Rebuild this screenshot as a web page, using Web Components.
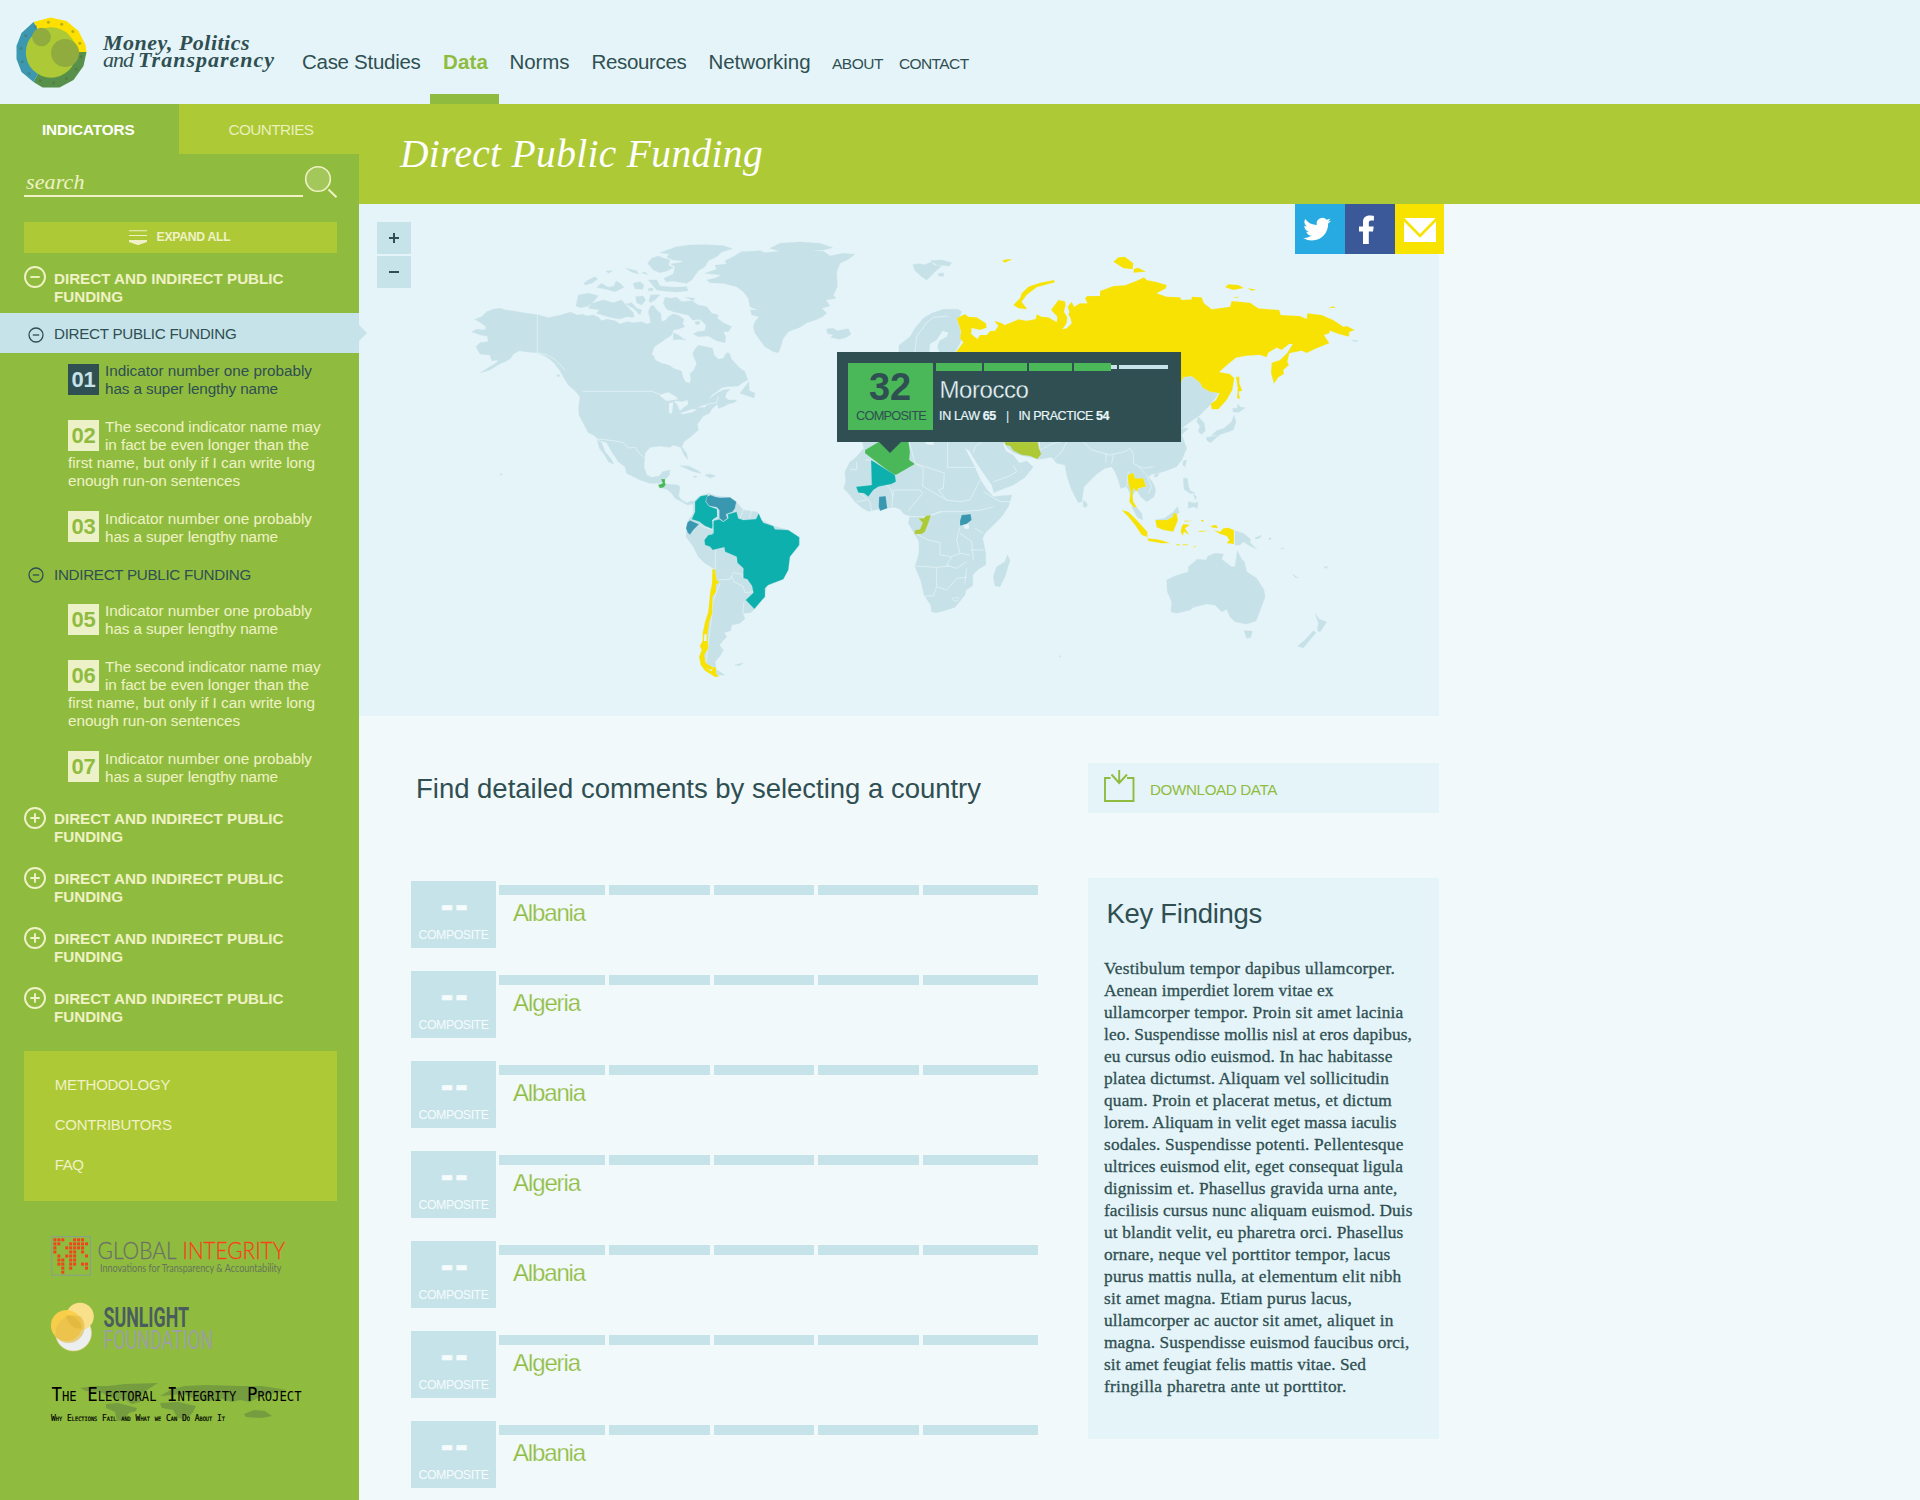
<!DOCTYPE html>
<html lang="en">
<head>
<meta charset="utf-8">
<title>Money, Politics and Transparency</title>
<style>
html,body{margin:0;padding:0}
body{width:1920px;height:1500px;overflow:hidden;background:#f1f9fb;font-family:"Liberation Sans",Arial,sans-serif;color:#2f4f52;
--ink:#2f4f52;--leaf:#8fbc3f;--lime:#adc936;--cream:#f0f2c6;--ice:#e5f4f8;--sky:#c6e3e9;--serif:"Liberation Serif",Georgia,serif}
</style>
</head>
<body>
<mpt-app></mpt-app>
<script>
const define = (name, css, html, after) => customElements.define(name, class extends HTMLElement {
  connectedCallback() {
    if (this.shadowRoot) return;
    const root = this.attachShadow({mode: 'open'});
    const body = typeof html === 'function' ? html(this) : html;
    root.innerHTML = `<style>*{box-sizing:border-box}${css}</style>${body}`;
    if (after) after(this, root);
  }
});
const line = (w, text, cls = '') => `<fit-line w="${w}"${cls ? ` class="${cls}"` : ''}>${text}</fit-line>`;

define('mpt-app', `
:host{display:flex;flex-direction:column;width:1920px;height:1500px}
.cols{display:flex;flex:1;min-height:0}`, `
<mpt-header></mpt-header><div class="cols"><mpt-sidebar></mpt-sidebar><mpt-main></mpt-main></div>`);

/* ---------- header ---------- */
define('mpt-header', `
:host{display:flex;height:104px;background:var(--ice);width:100%;flex:none}
mpt-logo{margin-left:15px;width:273px}
nav{display:flex;height:104px}
a{display:block;padding-top:49px;font-size:20.5px;line-height:26px;height:104px;color:var(--ink)}
a.on{color:var(--leaf);font-weight:bold;border-bottom:10px solid var(--leaf);width:69px;padding-left:13px}
a.s{font-size:15.5px;padding-top:51px}`, `
<mpt-logo></mpt-logo>
<nav>
<a style="margin-left:14px;width:128px">${line(118.5,'Case Studies')}</a>
<a class="on">${line(45,'Data')}</a>
<a style="margin-left:10.5px;width:82px">${line(60,'Norms')}</a>
<a style="width:117px">${line(95,'Resources')}</a>
<a style="width:123.5px">${line(102,'Networking')}</a>
<a class="s" style="width:67px">${line(51,'ABOUT')}</a>
<a class="s">${line(69.5,'CONTACT')}</a>
</nav>`);

define('mpt-logo', `
:host{display:flex}
svg{width:72px;height:72px;margin-top:16px;flex:none}
.name{margin:34px 0 0 16px;font-family:var(--serif);font-style:italic;color:var(--ink)}
.l{display:flex;align-items:baseline;height:17px;line-height:17px;font-size:22px;font-weight:bold}
.and{font-weight:normal;width:35px}
.l fit-line{display:block}`, () => {
  let dots = '';
  for (let i = 0; i < 14; i++) {
    const a = (i * 25.7 + 8) * Math.PI / 180;
    dots += `<circle cx="${(51.5 + 30.3 * Math.cos(a)).toFixed(1)}" cy="${(52.5 + 30.3 * Math.sin(a)).toFixed(1)}" r="1.5"/>`;
  }
  return `
<svg viewBox="15.5 16 72 72">
<path fill="#fde000" d="M34,22 51,17.5 67,21 79,31 86,45 87,52.5 51,52.5Z"/>
<path fill="#56904a" d="M87,52 84,66 74,80 60,87.5 43,87.5 34,82 51,52Z"/>
<path fill="#3c98b0" d="M34,22 22,33 17,46 17,59 22,72 34,82 51,52Z"/>
<g fill="#4d6a3c" opacity=".4">${dots}</g>
<circle cx="51.5" cy="52.5" r="25.2" fill="#adc936"/>
<g fill="#90ab3e"><circle cx="42" cy="37" r="9.3"/><circle cx="65.6" cy="53" r="14"/></g>
</svg>
<div class="name"><div class="l">${line(147,'Money, Politics')}</div><div class="l"><span class="and">${line(30,'and')}</span>${line(137,'Transparency')}</div></div>`;
});

/* ---------- sidebar ---------- */
define('mpt-sidebar', `
:host{display:flex;flex-direction:column;width:359px;flex:none;background:var(--leaf);color:var(--cream)}
.tabs{display:flex;height:50px;font-size:15.3px;line-height:51px;flex:none}
.tabs div{width:179px;padding-left:42px}
.tabs .a{color:#fff;font-weight:bold}
.tabs .b{width:180px;background:var(--lime);padding-left:49.5px;color:#e9f0bb}
.search{display:flex;height:67.5px;padding:0 0 0 24px;flex:none}
.field{width:279px;height:43px;border-bottom:2px solid var(--cream);font:italic 22px/24px var(--serif);padding:16px 0 0 2px}
.search svg{width:36px;height:36px;margin-top:10px}
.expand{display:flex;align-items:center;width:313px;height:31.5px;margin-left:24px;background:var(--lime);font-weight:bold;font-size:12.2px;padding-left:105px;flex:none}
.expand svg{width:18px;height:15px;margin-right:9.5px}
.links{margin:17px 0 0 24px;width:313px;height:150px;background:var(--lime);padding:14px 0 0 30.7px;font-size:15px;line-height:40px;flex:none}
svg{display:block;flex:none;overflow:visible}
.lg{margin-left:51px}
text{white-space:pre}`, () => {
  const map = ['111001110','110011111','100111110','100011010','010111001','011011000','011011011','001010001','001000000'];
  let cells = '';
  map.forEach((r, y) => [...r].forEach((c, x) => { if (c === '1') cells += `<rect x="${53.4 + x * 3.95}" y="${1238.3 + y * 4.05}" width="3" height="3"/>`; }));
  return `
<div class="tabs"><div class="a">${line(92.5,'INDICATORS')}</div><div class="b">${line(85,'COUNTRIES')}</div></div>
<div class="search"><div class="field">${line(58.5,'search')}</div>
<svg viewBox="303 164 36 36" fill="none" stroke="#f0f2c6" stroke-width="1.6"><circle cx="318" cy="179" r="12.3" fill="#a3c75b"/><path d="M328.5,189.5 336.5,197.3" stroke-width="2"/></svg></div>
<div class="expand"><svg viewBox="0 0 18 15" fill="#f0f2c6"><path d="M0,.3H18v1H0zM0,4.9H18v1.2H0zM0,10H18V12L9.5,15 8.5,15 0,12z"/></svg>${line(74,'EXPAND ALL')}</div>
<nav-group sign="-"></nav-group>
<nav-row on label="DIRECT PUBLIC FUNDING" w="182.5"></nav-row>
<nav-list first="01" active style="padding-top:9px"></nav-list>
<nav-row label="INDIRECT PUBLIC FUNDING" w="197"></nav-row>
<nav-list first="05"></nav-list>
<nav-group sign="+"></nav-group><nav-group sign="+"></nav-group><nav-group sign="+"></nav-group><nav-group sign="+"></nav-group>
<div class="links">${line(115.5,'METHODOLOGY')}${line(117,'CONTRIBUTORS')}${line(29,'FAQ')}</div>
<svg class="lg" style="margin-top:34px" width="240" height="45" viewBox="51 1235 240 45" font-family="Lato,sans-serif">
<rect x="51.8" y="1236.6" width="38.6" height="38.6" fill="none" stroke="#8b9d90" stroke-width="1"/>
<g fill="#f0431f">${cells}</g>
<g font-size="23.5" font-weight="300" stroke-width=".3"><text x="97.5" y="1258.8" fill="#6d7069" stroke="#6d7069" textLength="79" lengthAdjust="spacingAndGlyphs">GLOBAL</text>
<text x="182.5" y="1258.8" fill="#f8401c" stroke="#f8401c" textLength="102.5" lengthAdjust="spacingAndGlyphs">INTEGRITY</text></g>
<text x="100" y="1272" fill="#68745a" font-size="11" textLength="181.5" lengthAdjust="spacingAndGlyphs">Innovations for Transparency &amp; Accountability</text></svg>
<svg class="lg" style="margin-top:20px" width="180" height="53" viewBox="51 1300 180 53" font-family="Roboto,sans-serif">
<circle cx="73.5" cy="1333" r="18" fill="#eceff0" stroke="#e8cf7a" stroke-width=".6"/><circle cx="80" cy="1316.5" r="13.8" fill="#f9e08a"/>
<circle cx="66.5" cy="1325.5" r="15.6" fill="#fccf4a" opacity=".95"/>
<path d="M66.4,1315.3A15.6,15.6 0 0 1 81.9,1328.5A13.8,13.8 0 0 1 66.4,1315.3Z" fill="#e3b72f"/>
<path d="M55.5,1334A18,18 0 0 1 81,1316.8A15.6,15.6 0 0 1 56,1337Z" fill="#e3bb48" opacity=".65"/>
<text x="103.5" y="1326.8" font-size="27" font-weight="700" fill="#4b5c5f" textLength="85.5" lengthAdjust="spacingAndGlyphs">SUNLIGHT</text>
<text x="103.5" y="1349" font-size="26" fill="#9c9fa0" textLength="109.5" lengthAdjust="spacingAndGlyphs">FOUNDATION</text></svg>
<svg class="lg" style="margin-top:27px" width="260" height="50" viewBox="51 1380 260 50" font-family="'DejaVu Sans Mono',monospace">
<g fill="#71983f" opacity=".85"><path d="M80,1388 95,1386 108,1386 125,1384 158,1383 150,1388 143,1393 140,1402 132,1404 126,1400 112,1398 100,1392 86,1391Z"/><path d="M106,1404 118,1403 137,1408 136,1411 129,1413 124,1420 117,1421 115,1412 106,1408Z"/><path d="M160,1396 172,1389 185,1386 205,1385 240,1386 262,1386 287,1390 276,1393 262,1396 250,1402 240,1400 232,1402 222,1399 208,1401 196,1400 184,1394Z"/><path d="M160,1403 178,1402 196,1406 193,1412 186,1420 178,1418 173,1410 162,1408Z"/><path d="M244,1414 254,1410 265,1411 272,1416 262,1418 246,1417Z"/></g>
<text x="51.5" y="1401.3" font-size="20" style="font-variant:small-caps" textLength="250" lengthAdjust="spacingAndGlyphs">The Electoral Integrity Project</text>
<text x="51" y="1421.2" font-size="9" style="font-variant:small-caps" textLength="174" lengthAdjust="spacingAndGlyphs" stroke="#000" stroke-width=".2">Why Elections Fail and What we Can Do About It</text></svg>`;
});

define('nav-group', `
:host{display:flex;height:60px;padding:13px 0 0 24px;font-size:15.2px;font-weight:bold;line-height:18px;color:var(--cream);flex:none}
svg{width:22px;height:22px;margin-right:8px}.t{padding-top:4px}
:host([sign="+"]) .t{padding-top:3px}`, el => `
<svg viewBox="0 0 22 22" fill="none" stroke="#f0f2c6" stroke-width="1.9"><circle cx="11" cy="11" r="10"/><path d="M6.3,11h9.4${el.getAttribute('sign') === '+' ? 'M11,6.3v9.4' : ''}"/></svg>
<div class="t">${line(229.5,'DIRECT AND INDIRECT PUBLIC')}${line(69,'FUNDING')}</div>`);

define('nav-row', `
:host{display:flex;position:relative;align-items:center;height:40px;padding-left:27.5px;font-size:15.2px;color:var(--ink);flex:none}
:host([on]){background:var(--sky);}
:host([on])::after{content:"";position:absolute;left:359px;top:12px;border:8.5px solid transparent;border-left-color:var(--sky);border-right:0;z-index:2}
svg{width:16px;height:16px;margin:2px 10.5px 0 0}fit-line{line-height:40px;padding-top:1px}
:host([on]) fit-line{padding-top:2px}:host([on]) svg{margin-top:3px}`, el => `
<svg viewBox="0 0 16 16" fill="none" stroke="#2f4f52" stroke-width="1.3"><circle cx="8" cy="8" r="7"/><path d="M4.8,8h6.4"/></svg>${line(el.getAttribute('w'), el.getAttribute('label'))}`);

define('nav-list', `
:host{display:flex;flex-direction:column;gap:20px;padding:8px 0 8px 68px;font-size:15.3px;line-height:18px;flex:none}
b{float:left;width:31px;height:31px;background:#edf1c8;color:var(--leaf);margin:2px 6px 0 0;font-size:22px;line-height:32px;padding-left:3.5px;letter-spacing:0}
div:first-child b{margin-top:3px}div:last-child b{margin-top:1px}
.act{color:var(--ink)}.act b{background:var(--ink);color:var(--sky)}`, el => {
  const n = +el.getAttribute('first'), p = k => `<b>${line(24, '0' + (n + k))}</b>`;
  const short = line(207,'Indicator number one probably') + line(173,'has a super lengthy name');
  return `<div class="${el.hasAttribute('active') ? 'act' : ''}">${p(0)}${short}</div>
<div>${p(1)}${line(215.5,'The second indicator name may')}${line(204,'in fact be even longer than the')}${line(247,'first name, but only if I can write long')}${line(172,'enough run-on sentences')}</div>
<div>${p(2)}${short}</div>`;
});

/* ---------- main ---------- */
define('mpt-main', `
:host{display:block;width:1561px}
.title{height:100px;background:var(--lime);color:#fff;font:italic 39.5px/101px var(--serif);padding-left:41px}
.content{display:flex;padding-top:46px}
.left{width:679px;padding-left:52px;flex:none}
h2{margin:0;padding-left:5px;height:119px;font-size:27.5px;line-height:53px;font-weight:normal}
.rows{display:flex;flex-direction:column;gap:23px}
aside{margin-left:50px;width:351px;padding-top:1px;flex:none}
.dl{display:flex;height:50px;background:var(--ice);color:var(--leaf);font-size:15.2px;line-height:54px;padding-left:16px}
.dl svg{width:32px;height:34px;margin:5px 15px 0 -1px}
.key{margin-top:65px;height:561px;background:var(--ice);padding:17px 0 0 16px}
h3{margin:0 0 14px 2.5px;font-size:27.5px;line-height:37px;font-weight:normal;height:49px}
.body{font:17.3px/22px var(--serif);-webkit-text-stroke:.3px currentColor}`, () => {
  const t = [[291,'Vestibulum tempor dapibus ullamcorper.'],[229.5,'Aenean imperdiet lorem vitae ex'],[299.5,'ullamcorper tempor. Proin sit amet lacinia'],[308,'leo. Suspendisse mollis nisl at eros dapibus,'],[288.5,'eu cursus odio euismod. In hac habitasse'],[285,'platea dictumst. Aliquam vel sollicitudin'],[288,'quam. Proin et placerat metus, et dictum'],[292.5,'lorem. Aliquam in velit eget massa iaculis'],[299.5,'sodales. Suspendisse potenti. Pellentesque'],[299,'ultrices euismod elit, eget consequat ligula'],[293.5,'dignissim et. Phasellus gravida urna ante,'],[308.5,'facilisis cursus nunc aliquam euismod. Duis'],[299.5,'ut blandit velit, eu pharetra orci. Phasellus'],[286.5,'ornare, neque vel porttitor tempor, lacus'],[297.5,'purus mattis nulla, at elementum elit nibh'],[248,'sit amet magna. Etiam purus lacus,'],[289.5,'ullamcorper ac auctor sit amet, aliquet in'],[305.5,'magna. Suspendisse euismod faucibus orci,'],[262,'sit amet feugiat felis mattis vitae. Sed'],[242.5,'fringilla pharetra ante ut porttitor.']];
  return `
<div class="title">${line(363,'Direct Public Funding')}</div>
<map-panel></map-panel>
<div class="content"><div class="left"><h2>${line(565,'Find detailed comments by selecting a country')}</h2>
<div class="rows">${[0,1,0,1,0,1,0].map(a => `<country-row name="${a ? 'Algeria' : 'Albania'}" w="${a ? 67 : 72}"></country-row>`).join('')}</div></div>
<aside><div class="dl"><svg viewBox="1103 768 32 34" fill="none" stroke="#8fbc3f" stroke-width="1.9"><path d="M1110.5,778H1105v23h28.5v-23H1127M1119.2,770v12.5M1111.5,774.5 1119.2,783 1127,774.5"/></svg>${line(127,'DOWNLOAD DATA')}</div>
<div class="key"><h3>${line(155.5,'Key Findings')}</h3><div class="body">${t.map(([w, s]) => line(w, s)).join('')}</div></div></aside></div>`;
});

define('country-row', `
:host{display:flex;height:67px}
.c{width:85px;height:67px;flex:none;background:var(--sky);color:#f6fbfc;padding-left:7.5px}
.c b{display:block;font-size:39px;line-height:44px;height:45px;padding:2px 0 0 22px;-webkit-text-stroke:.4px currentColor}
.c .s{font-size:12.3px;line-height:16px;padding-top:.5px}
.r{padding:4px 0 0 3px;flex:none}
.bars{display:flex;gap:4px;height:10px}.bars i{background:var(--sky)}
.n{margin:3px 0 0 14px;font-size:24px;line-height:30px;color:var(--leaf);-webkit-text-stroke:.25px #f1f9fb}`, el => `
<div class="c"><b>${line(29,'--')}</b><div class="s">${line(70,'COMPOSITE')}</div></div>
<div class="r"><div class="bars">${[106,101,100,101,115].map(w => `<i style="width:${w}px"></i>`).join('')}</div>
<div class="n">${line(el.getAttribute('w'), el.getAttribute('name'))}</div></div>`);

/* ---------- map ---------- */
define('map-panel', `
:host{display:block;position:relative;width:1080px;height:512px;background:var(--ice)}
.zoom{position:absolute;left:18px;top:18px;display:flex;flex-direction:column;gap:2px}
.zoom svg{display:block;width:34px;height:32px;background:var(--sky)}
.share{position:absolute;left:936px;top:0;display:flex}
.share svg{display:block;height:50px}
map-tip{position:absolute;left:478px;top:148px}`, `
<world-map></world-map>
<div class="zoom"><svg viewBox="0 0 34 32"><path d="M12,16h10M17,11v10" stroke="#2f4f52" stroke-width="2"/></svg><svg viewBox="0 0 34 32"><path d="M12,16h10" stroke="#2f4f52" stroke-width="2"/></svg></div>
<div class="share">
<svg style="background:#27aae1" width="50" viewBox="0 0 50 50"><path fill="#fff" transform="translate(8.2,11.3) scale(1.16)" d="M24,4.6a10,10 0 0 1-2.8.8a5,5 0 0 0 2.1-2.7a10,10 0 0 1-3.1 1.2a4.9,4.9 0 0 0-8.4 4.5A14,14 0 0 1 1.7,3.1a4.9,4.9 0 0 0 1.5 6.6a5,5 0 0 1-2.2-.6a4.9,4.9 0 0 0 3.9 4.9a5,5 0 0 1-2.2.1a4.9,4.9 0 0 0 4.6 3.4A9.9,9.9 0 0 1 0,19.5a14,14 0 0 0 7.5 2.2c9.1,0 14.3-7.7 14-14.6A10,10 0 0 0 24,4.6z"/></svg>
<svg style="background:#3b5998" width="50" viewBox="0 0 50 50"><path fill="#fff" d="M18,40V27.5H14V22.5H18V18.2C18,13.8 20.6,11.6 24.6,11.6 26.6,11.6 28.6,11.9 28.9,12V16.6H26.2C24.2,16.6 23.8,17.6 23.8,19V22.5H28.7L28,27.5H23.8V40Z"/></svg>
<svg style="background:#f8e300" width="49" viewBox="0 0 49 50"><path fill="#fff" d="M9,14H41V38H9z"/><path fill="none" stroke="#f8e300" stroke-width="2.6" d="M8,14.5 25,32 42,14.5"/></svg>
</div>
<map-tip></map-tip>`);

define('map-tip', `
:host{display:flex;width:344px;height:90px;background:var(--ink);color:#e8f5f8;padding:11px 0 0 11px}
.c{width:85px;height:67px;background:#4ab858;color:var(--ink);padding-left:8px}
.c b{display:block;font-size:38px;line-height:48px;height:46px;padding-left:13px}
.c .s{font-size:12.8px;line-height:14px}
.r{padding-left:3px}
.bars{display:flex;gap:2px;height:8px;align-items:center}
.bars i{height:8px;background:#4ab858}.bars .l{height:4px;background:var(--sky)}
.n{margin:1px 0 0 3.5px;font-size:24px;line-height:36px;-webkit-text-stroke:.3px var(--ink)}
.p{display:flex;margin:0 0 0 3px;font-size:12.5px;line-height:17px}
:host::after{content:"";position:absolute;left:41px;top:89px;border:12px solid transparent;border-top-color:var(--ink);border-bottom:0}
.p fit-line{-webkit-text-stroke:.2px currentColor}`, `
<div class="c"><b>${line(42,'32')}</b><div class="s">${line(70,'COMPOSITE')}</div></div>
<div class="r"><div class="bars"><i style="width:46px"></i><i style="width:43px"></i><i style="width:43px"></i><i style="width:37px"></i><i class="l" style="width:6px;margin-left:-2px"></i><i class="l" style="width:49px"></i></div>
<div class="n">${line(89,'Morocco')}</div>
<div class="p"><span style="width:67px">${line(57,'IN LAW <b>65</b>')}</span><span style="width:12.5px">|</span>${line(90.5,'IN PRACTICE <b>54</b>')}</div></div>`);

define('world-map', `
:host{display:block}
svg{display:block;width:1080px;height:512px}
.l{fill:#c6e1e8;stroke:#c6e1e8;stroke-width:1;stroke-linejoin:round}
.w{fill:#e5f4f8}.b{fill:none;stroke:#e5f4f8;stroke-width:2.2;stroke-linejoin:round}
.y{fill:#f7e203}.t{fill:#0eb0ae}.g{fill:#4ab858}.o{fill:#adc936}.u{fill:#3a97b0}
.y,.t,.g,.o,.u{stroke:#e5f4f8;stroke-width:.6;stroke-linejoin:round}`, `
<svg viewBox="359 204 1080 512">
<g transform="translate(460,200) scale(.33333)">
<path class="l" d="M36,396 50,388 75,390 78,380 62,368 44,358 65,350 80,335 100,328 120,325 135,330 160,333 200,340 235,345 265,353 300,346 320,340 332,337 350,345 368,343 380,348 400,345 415,352 425,362 440,358 465,362 480,372 500,365 520,368 545,365 560,372 572,368 570,355 565,335 572,318 580,316 590,330 602,340 605,365 618,360 625,350 640,342 655,346 672,358 668,370 674,380 658,386 640,390 635,405 620,415 605,425 583,440 575,462 583,470 585,480 605,490 628,496 640,505 665,514 668,530 676,545 688,550 693,540 690,522 702,510 710,490 703,475 698,460 707,445 715,436 737,440 758,445 762,465 775,478 790,475 800,458 808,460 815,478 828,492 840,505 855,515 863,540 845,550 835,558 800,560 785,563 770,575 755,585 745,598 770,580 790,570 810,568 800,578 795,590 805,600 830,600 825,607 805,612 790,620 775,625 772,612 755,628 748,640 730,648 720,662 712,672 715,690 690,712 672,725 665,740 680,760 683,778 672,765 662,742 640,735 630,742 600,738 570,742 555,760 552,800 560,825 575,832 598,828 608,815 630,810 628,825 615,840 600,850 570,850 540,840 500,820 495,800 475,785 455,755 440,728 420,722 400,705 385,698 370,670 357,645 356,620 360,590 348,575 325,555 310,530 300,512 285,492 270,478 255,468 230,458 195,455 178,452 160,462 152,475 135,485 118,492 90,510 62,518 85,503 110,488 115,480 95,482 90,465 60,462 48,440 60,428 85,425 82,408 62,405Z
M412,720 425,728 435,755 452,775 462,793 445,785 432,762 418,745Z M596,862 612,852 625,853 655,855 660,862 656,888 665,900 680,908 695,902 705,905 700,912 682,915 660,902 645,895 635,880 620,868Z
M348,318 355,285 385,280 415,287 405,300 385,318 362,323Z M395,310 430,300 460,308 485,300 500,318 520,338 522,352 500,350 480,357 450,352 410,340 418,330 385,325Z M372,250 385,240 405,230 413,237 395,250 375,255Z M410,262 425,250 445,262 462,258 468,243 480,250 492,262 465,275 440,268Z M438,213 458,212 445,220Z M497,205 530,212 537,222 515,216Z M545,218 555,216 565,225Z M520,250 540,245 552,255 548,268 525,266Z M565,265 580,265 578,272 566,272Z
M563,190 575,175 595,168 612,175 630,180 625,195 640,203 620,213 600,218 580,210Z M600,158 650,140 690,135 740,134 790,137 817,146 785,156 770,170 745,182 735,200 715,212 695,240 680,250 640,243 618,245 612,235 640,222 645,200 632,192 665,187 668,182 640,180 620,172 628,162Z
M565,240 590,240 600,258 640,262 680,260 684,272 650,276 620,274 590,270Z M527,290 550,288 557,300 545,315 530,308Z M567,300 572,285 600,284 585,300 570,308Z M497,312 515,308 530,325 545,330 540,345 520,325Z
M610,310 615,292 635,295 650,292 665,305 695,302 715,315 740,320 755,340 775,345 772,355 790,368 815,380 805,395 790,395 797,410 795,428 770,422 745,408 715,410 700,402 712,395 735,392 738,375 720,358 698,360 685,345 660,340 640,335 620,328Z M676,292 705,295 700,302Z M640,398 655,405 668,415 678,420 660,418 640,420Z M705,365 718,363 720,372 708,374Z
M735,220 770,208 765,196 800,192 795,182 820,170 845,155 900,152 915,158 960,154 930,145 960,130 1020,126 1080,130 1118,143 1090,150 1045,150 1090,154 1110,168 1150,160 1184,163 1165,178 1140,190 1130,215 1132,260 1120,285 1128,295 1098,300 1110,318 1085,325 1100,340 1085,352 1060,362 1040,368 1020,382 985,395 968,418 962,440 955,458 940,455 915,440 900,420 885,400 880,380 885,365 897,350 875,345 872,330 893,330 870,320 865,295 850,275 830,260 790,250 750,248 740,240 765,235 785,225Z
M1100,387 1118,385 1132,392 1165,386 1173,402 1160,412 1138,418 1112,412 1120,405 1102,400Z
M840,580 855,560 866,545 868,572 885,580 882,594 862,587Z M660,797 685,798 715,812 724,820 700,815Z M735,825 750,822 767,828 750,834Z M700,828 712,830 703,833Z M120,820 127,823 122,826Z M825,1394 850,1389 838,1397Z M290,524 300,525 295,532Z
M700,905 715,890 745,880 770,888 810,892 830,907 850,930 892,936 905,960 940,978 985,990 1018,1012 1015,1040 990,1070 985,1110 970,1138 920,1158 915,1190 885,1226 872,1238 848,1240 855,1256 840,1270 815,1275 812,1292 792,1298 800,1310 778,1335 790,1350 780,1368 765,1385 768,1400 745,1400 725,1360 745,1235 765,1108 735,1090 715,1070 700,1040 678,1010 682,965 700,940Z M768,1408 795,1425 770,1425Z"/>
<path class="w" d="M598,585 625,577 648,590 655,598 640,600 620,603 605,592Z M627,610 640,606 636,640 627,640Z M642,602 668,605 682,600 685,612 668,625 660,632 652,615Z M660,640 695,628 712,628 700,636 670,643Z M712,622 740,614 735,622Z"/>
<path class="b" d="M232,345V458L262,465 285,478 315,510 M368,574H575L600,583 M415,717 460,722 490,728 505,744 525,742 540,762 552,772 M720,622 745,612 770,608 775,590 M766,1050V1108 M775,1140 810,1138 820,1118 845,1122 850,1135 M815,1130 822,1145 850,1160 855,1178 880,1175 M852,1205 848,1240 M850,930 838,958 M875,932 868,955 M780,1150 760,1200 750,1290 738,1385 M718,975 735,982 760,990"/>
<path class="t" d="M705,905 722,888 745,884 738,905 748,918 772,926 773,950 758,960 760,975 757,987 735,978 718,965 695,958 705,935Z M733,1020 745,1005 758,1003 760,962 778,958 790,965 805,955 803,943 830,935 835,955 850,960 888,957 896,940 905,960 910,968 940,978 945,988 985,990 1018,1012 1018,1035 990,1070 985,1110 970,1138 925,1155 915,1165 915,1190 883,1227 857,1200 880,1178 876,1158 862,1138 850,1135 850,1105 832,1088 830,1070 795,1055 793,1042 758,1050 750,1040 735,1035Z"/>
<path class="b" d="M745,884 738,905 748,918 772,926 773,950 758,960 760,1000"/>
<path class="u" d="M740,890 752,885 765,890 780,893 810,892 829,905 825,925 818,935 798,943 802,955 790,964 778,955 778,930 770,922 748,918 738,905Z M682,968 690,961 717,973 700,990 690,1004 683,998 678,985Z"/>
<path class="y" d="M757,1107 765,1108 770,1140 778,1147 768,1155 768,1175 758,1190 757,1240 748,1265 743,1300 745,1345 733,1365 737,1388 755,1400 768,1402 769,1422 778,1430 765,1431 735,1412 722,1395 717,1370 725,1350 719,1338 728,1322 728,1300 735,1265 745,1235 750,1180 756,1150Z"/>
<path class="w" d="M733,1303h7v20h-8zM735,1403 752,1410 760,1402 754,1414z"/>
<path class="g" d="M603,837H615V850L618,852 612,862 600,865 594,855 608,850Z"/>
</g>
<g transform="translate(800,320) scale(.33333)">
<path class="l" d="M297,96 297,76 330,50 345,25 370,-5 395,-20 430,-32 475,-32 485,-25 475,0 485,60 465,96Z
M338,-166 355,-169 375,-166 395,-175 402,-165 425,-162 405,-145 380,-120 365,-130 345,-148Z M392,-178 425,-180 455,-172 448,-162 410,-166Z M415,-140 432,-140 430,-131 416,-132Z
M187,366 192,385 165,415 150,425 135,455 137,485 131,505 145,520 165,545 185,563 205,574 235,568 270,563 285,562 300,568 312,582 330,588 325,610 340,635 357,665 357,700 345,740 362,780 372,825 392,855 395,875 410,878 440,870 465,862 495,825 498,810 518,797 518,765 535,748 557,735 557,700 548,655 555,640 575,620 605,590 625,560 636,525 600,528 580,530 562,510 545,485 530,450 512,415 495,385 505,400 530,440 560,480 575,505 580,518 600,510 640,495 675,472 700,440 680,422 658,428 640,405 622,395 615,378 640,400 680,412 718,418 755,412 770,430 795,435 800,465 815,510 835,548 845,545 852,500 890,462 915,445 935,440 945,455 955,480 962,505 980,500 990,520 990,545 1000,520 1010,510 1022,530 1040,545 1062,530 1067,510 1060,490 1045,470 1055,463 1090,455 1130,440 1145,420 1160,385 1145,345 1165,325 1145,325 1165,310 1200,285 1235,250 1255,220 1210,205 1195,175 1165,168 1145,175 1000,300 700,300 300,300Z
M580,770 590,740 615,725 622,705 630,720 615,770 600,800 585,798Z M850,540 862,552 860,562 850,560Z M1195,290 1213,310 1216,332 1205,343 1195,335 1200,318 1190,305Z
M995,558 1012,565 1025,580 1028,600 1012,592 1003,575Z M1065,600 1095,595 1120,575 1132,560 1138,578 1100,600Z M1150,475 1162,475 1165,495 1170,512 1185,520 1170,520 1152,508Z M1165,545 1185,550 1194,545 1192,565 1180,560 1165,565Z M1180,522 1190,530 1186,540Z M1150,422 1160,420 1155,440 1148,435Z M1065,462 1078,460 1070,472 1063,470Z M1218,355 1232,350 1260,345 1250,352 1232,368 1222,362Z"/>
<path class="w" d="M388,96 390,72 410,60 428,32 445,38 440,50 418,62 412,80 418,96Z M376,366 402,366 400,376 378,372Z M490,610 505,608 508,625 498,628 492,622Z M495,385 508,392 530,430 556,468 575,495 582,520 560,505 540,475 520,430Z M613,366 622,385 640,398 660,406 690,412 718,419 700,440 680,422 658,428 640,405 618,393 610,375Z"/>
<path class="b" d="M345,96 350,50 378,10 400,-8 445,-12 M443,366V445 M443,442H525 M345,430 435,460 M433,460 430,505 415,510 M328,366 345,430 370,445 368,500 M150,448H170V425 M195,420H215 M280,510H360L368,520 335,560 325,575 M280,510 275,560 M415,510 440,540 480,545 510,540 525,510 540,480 M330,590H380L420,575 480,575 545,570 580,560 M550,515 600,545 630,545 M345,640 385,660 420,668 420,705 455,710 480,700 M345,738 410,742 450,738 M410,745V800L400,828H375 M410,800 440,810 470,775 500,772 M480,640 515,665 M480,620 470,660 480,700 510,705 M510,690 552,690 M455,710 440,735 470,745 500,725 M515,665 520,720 M385,590 425,575 M525,625 550,640 M500,745 495,790 M215,500 180,520 210,545 215,572 M255,490 270,505 280,530 M370,500 440,540 M200,540 170,545 M520,400 525,380 545,366 M580,485 625,470 650,455 640,435 M718,366 720,390 760,370 785,366 M760,420 785,395 800,366 M850,366 875,390 930,405 975,395 990,385 M918,400V430 M940,405 935,430 M990,385 1000,400 1000,430 1030,445 1060,440 M985,455 980,500 M1010,435 1040,465 1055,500 1045,520 M458,835a9,7 0 1 0 16,-3z"/>
<path class="g" d="M195,390 235,366 325,360 330,395 328,420 345,432 288,465 278,463 195,400Z"/>
<path class="t" d="M213,420 222,425 285,465 288,485 275,492 235,500 220,510 205,530 192,520 175,518 168,500 215,495Z"/>
<path class="u" d="M237,530 257,528 262,565 240,573 236,560Z M485,585 512,582 515,600 500,612 480,617 480,602Z"/>
<path class="o" d="M355,595 372,595 378,587 393,585 385,610 375,635 365,642 343,643 345,630 360,628 368,608Z M613,366 713,366 717,385 724,402 712,418 690,408 665,405 640,392 630,378 617,376Z"/>
<path class="y" d="M983,465 1000,458 1005,475 1030,475 1038,500 1015,505 1012,515 1000,505 998,530 1000,545 1012,565 1000,560 988,545 992,515 985,490Z M965,570 985,575 1010,600 1042,635 1042,652 1025,645 1005,615 985,590Z M1042,655 1070,658 1090,662 1110,670 1085,670 1045,663Z M1066,600 1100,600 1118,590 1120,580 1130,580 1134,600 1120,635 1090,630 1070,622Z M1145,620 1150,612 1170,615 1155,625 1168,645 1152,635 1148,648 1142,635Z M1152,602 1180,602 1155,605Z M1202,600 1212,600 1208,607Z M1230,618 1250,616 1255,624 1240,623Z M1180,680 1192,676 1180,684Z M1128,673h12v3h-12z M1148,673h15v3h-15z M1195,633 1225,632 1200,635Z"/>
</g>
<g transform="translate(1000,200) scale(.33333)">
<path class="y" d="M-132,456 -110,427 -120,415 -117,395 -125,370 -130,355 -105,342 -95,350 -70,352 -42,370 -40,383 -60,390 -85,384 -86,402 -68,417 -60,405 -40,405 -30,393 -15,392 -5,378 -18,362 2,368 15,375 55,358 80,362 107,357 110,343 125,350 145,352 170,366 172,350 153,330 160,320 175,300 195,304 197,315 192,335 202,352 200,370 188,387 200,385 215,370 210,350 205,345 208,335 203,320 215,305 222,320 240,310 262,310 255,295 262,288 300,288 300,273 340,258 375,256 410,242 432,232 440,240 470,246 500,255 498,265 470,280 500,290 540,292 545,300 575,298 575,290 605,292 612,310 635,328 690,320 695,303 750,308 775,325 838,330 842,345 900,348 920,357 922,340 965,345 1000,360 1030,380 1040,378 1065,390 1048,396 1047,410 1015,402 990,392 988,400 972,405 988,430 950,445 920,459 905,452 868,460 862,485 867,495 850,510 852,522 835,532 822,551 813,520 815,488 840,480 862,458 878,432 868,432 845,450 830,443 805,458 800,472 780,465 740,467 708,473 685,492 658,516 690,522 703,535 697,570 680,600 655,628 635,628 632,612 648,600 658,580 630,575 608,563 600,548 575,529 550,532 543,550 500,600 -132,560Z
M708,530 718,530 718,550 727,572 716,575 720,597 711,595 713,565Z M340,185 355,172 375,170 400,190 398,208 370,205Z M400,218 402,206 415,203 438,215Z M675,262 685,253 715,255 732,264 700,270Z M742,264 770,269 755,272Z M698,291 718,290 710,294Z M983,325 1000,319 1008,323Z M5,182 20,178 38,177 15,188Z M40,315 60,295 65,280 85,260 120,248 162,240 165,247 110,262 80,285 65,305 82,328 55,325Z"/>
<path class="l" d="M713,612 722,622 736,623 718,636 700,636 698,625 712,625Z M702,645 708,665 700,690 680,697 655,705 635,706 650,692 672,685 695,665Z M620,712 632,712 632,725 625,725Z M1055,420 1075,422 1065,425Z"/>
</g>
<g transform="translate(1060,420) scale(.33333)">
<path class="l" d="M320,480 345,468 385,455 385,440 412,418 438,420 445,408 465,400 490,402 485,418 515,440 525,440 532,392 545,418 553,425 560,455 590,475 612,510 615,530 600,572 588,603 560,612 525,605 510,590 500,568 485,575 465,555 440,552 400,562 390,570 350,580 333,575 335,545 322,515Z M552,632 577,633 573,652 560,655Z M525,332 550,340 572,358 570,368 590,387 570,378 550,365 540,375 525,375Z M585,353 605,346 598,355 588,357Z M765,580 778,598 800,606 792,618 780,636 772,632 775,608Z M713,678 735,660 760,632 768,638 745,665 730,684Z M697,462 715,474 705,472Z M792,440 803,440 798,446Z M627,354h6v4h-6z M663,384h8v2h-8z M-2,706 2,710 -2,712Z"/>
<path class="y" d="M450,320 465,314 472,325Z M460,330 480,335 490,325 505,323 522,330 522,372 500,370 508,360 500,348 480,342Z M415,333 445,332 420,336Z"/>
</g>
</svg>`);

/* One line of text, tracked so that it fills the width given in w. */
define('fit-line', `:host{display:block;white-space:nowrap}span{display:inline-block}`, '<span><slot></slot></span>', (el, root) => {
  const box = root.querySelector('span'), n = el.textContent.length;
  const natural = box.getBoundingClientRect().width;
  if (natural) box.style.letterSpacing = ((el.getAttribute('w') - natural) / n).toFixed(3) + 'px';
});
</script>
</body>
</html>
